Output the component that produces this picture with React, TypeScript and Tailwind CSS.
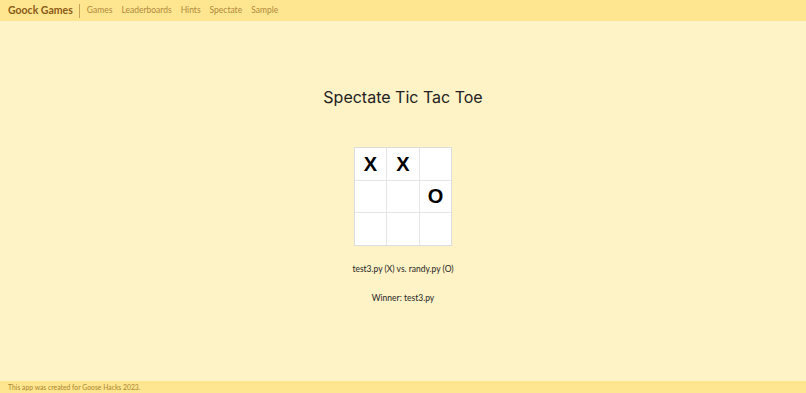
const board = ["X", "X", "", "", "", "O", "", "", ""];

export default function App() {
  return (
    <div
      className="flex h-[393px] w-full flex-col bg-[#fef3c6] text-[#1f1f1f]"
      style={{ fontFamily: '"Lato", "Open Sans", sans-serif' }}
    >
      {/* NAVBAR */}
      <nav className="flex h-[21px] items-center bg-[#fee590] pl-2 text-[8.5px]">
        <span className="text-[10.5px] font-bold text-[#8a5b17]">Goock Games</span>
        <span className="ml-[6px] mr-[7px] h-[14px] w-px bg-[#c9a35a]" />
        <div className="flex gap-[9px] text-[#b08a3c]">
          <span>Games</span>
          <span>Leaderboards</span>
          <span>Hints</span>
          <span>Spectate</span>
          <span>Sample</span>
        </div>
      </nav>

      <main className="flex flex-1 flex-col items-center">
        <h1
          className="mt-[64px] text-[16px] text-[#222]"
          style={{ fontFamily: '"Inter", "Noto Sans", sans-serif' }}
        >
          Spectate Tic Tac Toe
        </h1>

        {/* BOARD */}
        <div className="mt-[38px] grid grid-cols-3 gap-px border border-[#dcdcdc] bg-[#e6e6e6]">
          {board.map((c, i) => (
            <div
              key={i}
              className="flex h-[31.5px] w-[31.5px] items-center justify-center bg-white text-[20px] font-bold text-black"
              style={{ fontFamily: '"Liberation Sans", sans-serif' }}
            >
              {c}
            </div>
          ))}
        </div>

        <p className="mt-[17px] text-[8.5px]">test3.py (X) vs. randy.py (O)</p>
        <p className="mt-[17px] text-[8.5px]">Winner: test3.py</p>
      </main>

      <footer className="flex h-[12px] items-center bg-[#fee590] pl-2 text-[6.8px] text-[#a9852e]">
        This app was created for Goose Hacks 2023.
      </footer>
    </div>
  );
}
